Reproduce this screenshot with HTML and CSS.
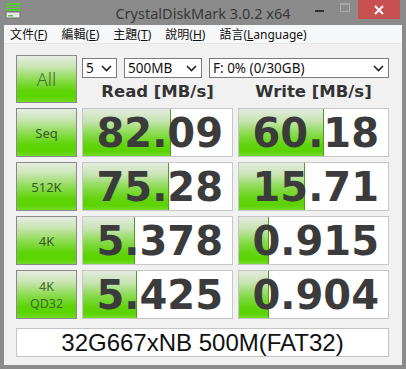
FILE: index.html
```html
<!DOCTYPE html>
<html lang="zh-Hant">
<head>
    <meta charset="UTF-8">
    <title>CrystalDiskMark 3.0.2 x64</title>
    <link rel="stylesheet" href="styles.css">
</head>
<body>
<div class="window">
    <div class="titlebar">
        <svg class="app-icon" width="16" height="16" viewBox="0 0 16 16">
            <rect x="1" y="0" width="14" height="2" fill="#5cc43a"/>
            <rect x="1" y="3" width="14" height="2" fill="#5cc43a"/>
            <rect x="1" y="6" width="14" height="2" fill="#5cc43a"/>
            <rect x="1" y="9" width="14" height="6" fill="#e8e8e8" stroke="#6f6f6f" stroke-width="1"/>
            <rect x="3" y="12" width="5" height="1.5" fill="#5cc43a"/>
        </svg>
        <div class="title">CrystalDiskMark 3.0.2 x64</div>
        <div class="win-btn min"><span></span></div>
        <div class="win-btn max"><span></span></div>
        <div class="win-btn close">
            <svg width="10" height="10" viewBox="0 0 10 10">
                <path d="M1 1 L9 9 M9 1 L1 9" stroke="#fff" stroke-width="2"/>
            </svg>
        </div>
    </div>

    <div class="frame">
        <div class="menubar">
            <span class="menu">文件(<u>F</u>)</span>
            <span class="menu">編輯(<u>E</u>)</span>
            <span class="menu">主題(<u>T</u>)</span>
            <span class="menu">說明(<u>H</u>)</span>
            <span class="menu">語言(<u>L</u>anguage)</span>
        </div>

        <div class="content">
            <div class="grid">
                <div class="btn btn-all">All</div>
                <div class="top">
                    <div class="selects">
                        <div class="select s-count">5<svg class="chev" width="11" height="7" viewBox="0 0 11 7"><path d="M1 1 L5.5 5.5 L10 1" fill="none" stroke="#222" stroke-width="1.6"/></svg></div>
                        <div class="select s-size">500MB<svg class="chev" width="11" height="7" viewBox="0 0 11 7"><path d="M1 1 L5.5 5.5 L10 1" fill="none" stroke="#222" stroke-width="1.6"/></svg></div>
                        <div class="select s-drive">F: 0% (0/30GB)<svg class="chev" width="11" height="7" viewBox="0 0 11 7"><path d="M1 1 L5.5 5.5 L10 1" fill="none" stroke="#222" stroke-width="1.6"/></svg></div>
                    </div>
                    <div class="heads">
                        <div class="head">Read [MB/s]</div>
                        <div class="head">Write [MB/s]</div>
                    </div>
                </div>

                <div class="btn">Seq</div>
                <div class="cell"><div class="bar" style="width: 87px"></div><span class="num">82.09</span></div>
                <div class="cell"><div class="bar" style="width: 84px"></div><span class="num">60.18</span></div>

                <div class="btn">512K</div>
                <div class="cell"><div class="bar" style="width: 85px"></div><span class="num">75.28</span></div>
                <div class="cell"><div class="bar" style="width: 65px"></div><span class="num">15.71</span></div>

                <div class="btn">4K</div>
                <div class="cell"><div class="bar" style="width: 51px"></div><span class="num">5.378</span></div>
                <div class="cell"><div class="bar" style="width: 29px"></div><span class="num">0.915</span></div>

                <div class="btn btn-two"><span>4K</span><span>QD32</span></div>
                <div class="cell"><div class="bar" style="width: 53px"></div><span class="num">5.425</span></div>
                <div class="cell"><div class="bar" style="width: 29px"></div><span class="num">0.904</span></div>
            </div>

            <div class="comment">32G667xNB 500M(FAT32)</div>
        </div>
    </div>
</div>
</body>
</html>
```

FILE: styles.css
```css
body {
    margin: 0;
    background-color: #8b8b8b;
    font-family: "Noto Sans", "Noto Sans CJK TC", sans-serif;
}

.window {
    width: 406px;
    height: 369px;
    display: flex;
    flex-direction: column;
    background-color: #8b8b8b;
}

/* title bar */
.titlebar {
    height: 25px;
    display: flex;
    align-items: flex-start;
    position: relative;
}

.app-icon {
    margin: 3px 0 0 5px;
}

.title {
    position: absolute;
    left: 0;
    right: 0;
    top: 3px;
    text-align: center;
    font-size: 14.5px;
    color: #383838;
}

.win-btn {
    height: 19px;
    display: flex;
    align-items: center;
    justify-content: center;
}

.win-btn.min {
    margin-left: auto;
    width: 26px;
}

.win-btn.min span {
    display: block;
    width: 9px;
    height: 2px;
    margin-top: 3px;
    background-color: #333;
}

.win-btn.max {
    width: 26px;
}

.win-btn.max span {
    display: block;
    width: 8px;
    height: 6px;
    margin-top: -4px;
    border: 1px solid #a8a8a8;
    border-top-width: 2px;
}

.win-btn.close {
    width: 42px;
    margin-right: 6px;
    background-color: #c75050;
}

/* frame */
.frame {
    flex: 1;
    margin: 0 4px 4px 4px;
    background-color: #f1f1f1;
}

.menubar {
    height: 19px;
    display: flex;
    align-items: center;
    background-color: #f6f7f8;
    border-bottom: 1px solid #e6e6e6;
    box-sizing: border-box;
    padding-left: 6px;
    font-size: 12px;
    color: #111;
}

.menu {
    margin-right: 14px;
}

.menu u {
    text-underline-offset: 1px;
}

.content {
    padding: 11px 0 0 12px;
}

.grid {
    display: grid;
    grid-template-columns: 61px 151px 151px;
    grid-template-rows: 48px repeat(4, 49px);
    column-gap: 5px;
    row-gap: 5px;
}

/* green buttons */
.btn {
    border: 1px solid #8a8a8a;
    box-sizing: border-box;
    background: linear-gradient(to bottom, #e6ece2 0%, #cbe6b6 22%, #8fdc55 50%, #5ed408 75%, #5cd400 90%, #72dc28 100%);
    display: flex;
    flex-direction: column;
    align-items: center;
    justify-content: center;
    text-align: center;
    font-size: 13px;
    color: #36592a;
}

.btn-all {
    font-size: 18px;
    font-weight: 300;
    color: #3f6a32;
}

.btn-two {
    font-size: 12.5px;
    line-height: 17px;
    color: #3f6a32;
}

.top {
    grid-column: 2 / 4;
    display: flex;
    flex-direction: column;
}

.selects {
    display: flex;
    gap: 7px;
    margin-top: 3px;
}

.select {
    height: 20px;
    box-sizing: border-box;
    border: 1px solid #7a7a7a;
    background-color: #fff;
    display: flex;
    align-items: center;
    padding-left: 3px;
    font-size: 13.5px;
    color: #111;
}

.select .chev {
    margin-left: auto;
    margin-right: 4px;
}

.s-count {
    width: 35px;
}

.s-size {
    width: 78px;
}

.s-drive {
    flex: 1;
}

.heads {
    display: flex;
    gap: 5px;
    margin-top: 2px;
}

.head {
    width: 151px;
    text-align: center;
    font-family: "DejaVu Sans", sans-serif;
    font-weight: bold;
    font-size: 16.5px;
    line-height: 23px;
    color: #333;
}

/* result cells */
.cell {
    position: relative;
    border: 1px solid #c6c6c6;
    box-sizing: border-box;
    background-color: #fff;
    display: flex;
    align-items: center;
    justify-content: flex-end;
    padding-right: 9px;
}

.bar {
    position: absolute;
    left: 0;
    top: 0;
    bottom: 0;
    border-right: 1px solid #4f9a2a;
    background: linear-gradient(to bottom, #e4ebe0 0%, #c8e4b4 25%, #8edb55 50%, #62d410 75%, #5cd200 90%, #74dc2c 100%);
}

.num {
    position: relative;
    font-family: "DejaVu Sans", sans-serif;
    font-weight: bold;
    font-size: 40px;
    line-height: 40px;
    color: #3b3b3b;
}

.comment {
    width: 373px;
    height: 29px;
    margin-top: 9px;
    box-sizing: border-box;
    border: 1px solid #c4c4c4;
    background-color: #fff;
    display: flex;
    align-items: center;
    justify-content: center;
    font-family: "Liberation Sans", Arial, sans-serif;
    font-size: 24px;
    color: #111;
}
```
